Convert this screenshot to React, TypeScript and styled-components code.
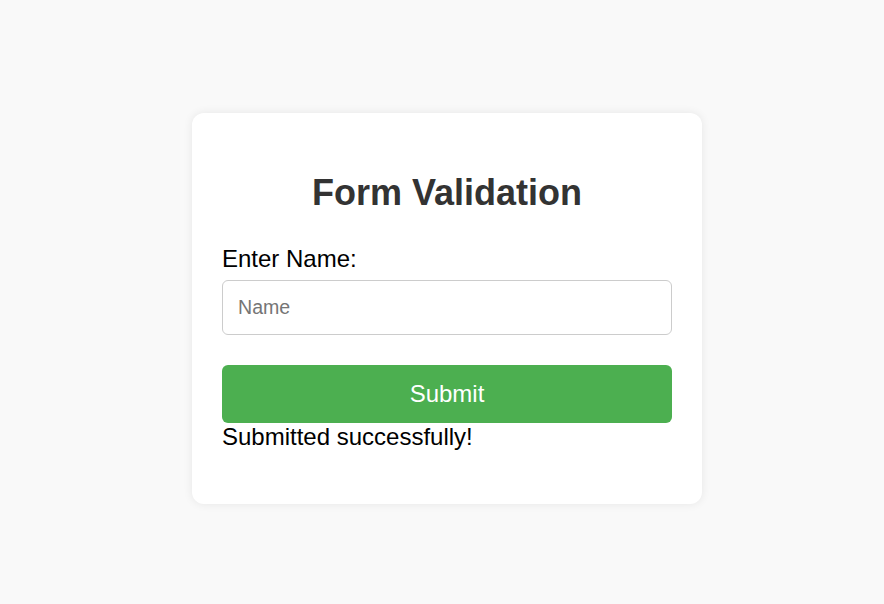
import React, { useState } from "react";
import styled, { createGlobalStyle } from "styled-components";

const GlobalStyle = createGlobalStyle`
  html, body {
    margin: 0;
    padding: 0;
    background: #f9f9f9;
    font-family: "Liberation Sans", Arial, sans-serif;
  }
  * { box-sizing: border-box; }
`;

const Page = styled.div`
  width: 100%;
  height: 604px;
  display: flex;
  align-items: center;
  justify-content: center;
  padding: 13px 0 0 10px;
`;

const Card = styled.div`
  width: 510px;
  background: #ffffff;
  border-radius: 12px;
  box-shadow: 0 0 10px rgba(0, 0, 0, 0.08);
  padding: 30px 30px 53px;
`;

const Title = styled.h1`
  margin: 29.5px 0 30.5px;
  font-size: 36px;
  font-weight: bold;
  color: #333333;
  text-align: center;
`;

const Label = styled.label`
  display: block;
  font-size: 24px;
  color: #000000;
  margin-bottom: 7.5px;
`;

const Input = styled.input`
  display: block;
  width: 100%;
  height: 55px;
  padding: 0 15px;
  border: 1px solid #cccccc;
  border-radius: 6px;
  font-family: "Liberation Sans", Arial, sans-serif;
  font-size: 19.6px;
  color: #000;
  outline: none;
  &::placeholder {
    color: #757575;
  }
`;

const Button = styled.button`
  display: block;
  width: 100%;
  height: 58px;
  margin-top: 30px;
  border: none;
  border-radius: 6px;
  background: #4caf50;
  color: #ffffff;
  font-family: "Liberation Sans", Arial, sans-serif;
  font-size: 24px;
  cursor: pointer;
`;

const Message = styled.div`
  font-size: 24px;
  color: #000000;
`;

export default function App() {
  const [name, setName] = useState("");
  return (
    <>
      <GlobalStyle />
      <Page>
        <Card>
          <Title>Form Validation</Title>
          <Label htmlFor="name">Enter Name:</Label>
          <Input
            id="name"
            placeholder="Name"
            value={name}
            onChange={(e) => setName(e.target.value)}
          />
          <Button type="button">Submit</Button>
          <Message>Submitted successfully!</Message>
        </Card>
      </Page>
    </>
  );
}
